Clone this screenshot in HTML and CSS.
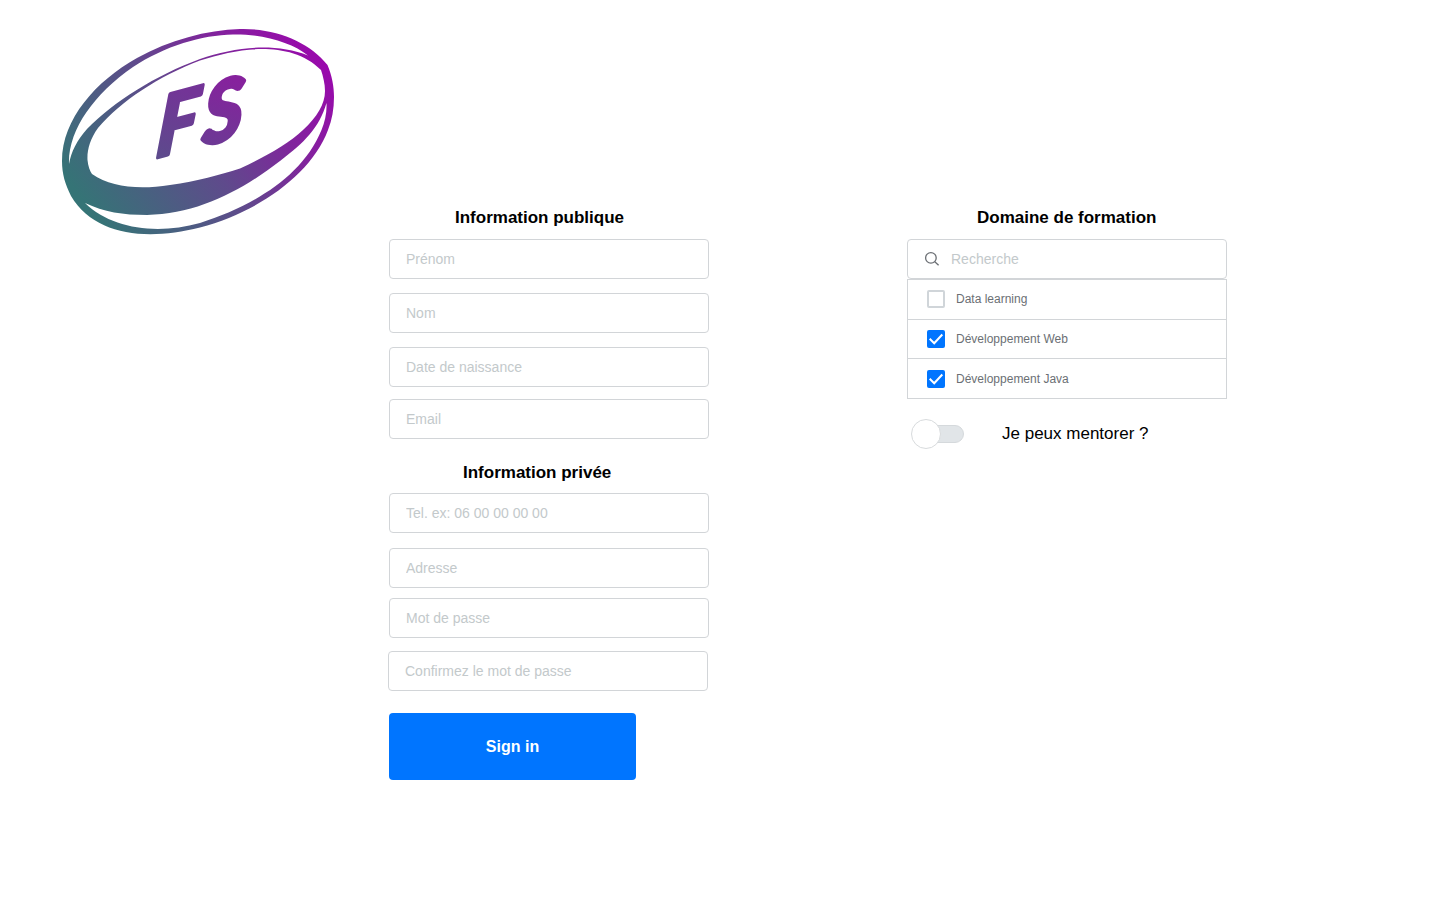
FILE: index.html
```html
<!DOCTYPE html>
<html lang="fr">
<head>
<meta charset="utf-8">
<title>Inscription</title>
<link rel="stylesheet" href="styles.css">
</head>
<body>
<main class="page">
  <header class="brand">
    <svg class="logo" viewBox="60 26 276 210" role="img" aria-label="FS">
      <defs>
        <linearGradient id="ink" gradientUnits="userSpaceOnUse" x1="75" y1="190" x2="300" y2="26">
          <stop offset="0" stop-color="#357476"/>
          <stop offset=".45" stop-color="#5f4a8c"/>
          <stop offset=".72" stop-color="#80259c"/>
          <stop offset="1" stop-color="#9a08ac"/>
        </linearGradient>
        <linearGradient id="ink-f" gradientUnits="userSpaceOnUse" x1="0" y1="0" x2="30" y2="-55">
          <stop offset="0" stop-color="#5c4b8c"/>
          <stop offset="1" stop-color="#733497"/>
        </linearGradient>
        <linearGradient id="ink-s" gradientUnits="userSpaceOnUse" x1="0" y1="0" x2="30" y2="-55">
          <stop offset="0" stop-color="#6b3a94"/>
          <stop offset="1" stop-color="#86229d"/>
        </linearGradient>
      </defs>
      <path fill="url(#ink)" fill-rule="evenodd" d="M240 29C275 28 310 42 327.500 65C332 76 334 86 334 97C334 109 332 120 328 130C311 175 258 212 200 227.500C147 241 95 236 71 196C65 184 62 174 62 161C62 119 96 81 137 58C169 40 207 30 240 29Z
      M69 164C68 130 94 94 133 67C165 46 202 35 233 34.500C264 34 292 43 308 55.500C295 50 278 47.500 263 47.500C242 47.500 220 52 200 59C156 75 113 102 87 129C77 140 71 152 69 164Z
      M98 128C90 139 87 150 87.500 160C88 166 90 171 92 174C111 187 138 190 170 185C198 181 219 175 240 168.500C265 157 288 144 303 130C317 117 325 104 325 91C325 84 323 76 321 70C305 54 283 49 262 49C242 49 220 54 200 60.500C159 76 121 101 98 128Z
      M326.500 103C327 112 325 122 321.500 130C302 178 250 207 200 223C157 235 112 229 85 203C104 212 123 215 147 215C198 214 241 191 280 161C305 142 319 128 326.500 103Z"/>
      <g class="monogram">
        <text class="letter-f" transform="translate(155 158) rotate(-15) skewX(-20)">F</text>
        <text class="letter-s" transform="translate(202 146) rotate(-15) skewX(-18)">S</text>
      </g>
    </svg>
  </header>

  <form class="account">
    <h2 class="title title-public">Information publique</h2>
    <input class="field" placeholder="Prénom">
    <input class="field gap-14" placeholder="Nom">
    <input class="field gap-14" placeholder="Date de naissance">
    <input class="field gap-12" placeholder="Email">
    <h2 class="title title-private">Information privée</h2>
    <input class="field" placeholder="Tel. ex: 06 00 00 00 00">
    <input class="field gap-15" placeholder="Adresse">
    <input class="field gap-10" placeholder="Mot de passe">
    <input class="field confirm" placeholder="Confirmez le mot de passe">
    <button class="submit" type="button">Sign in</button>
  </form>

  <section class="domain">
    <h2 class="title title-domain">Domaine de formation</h2>
    <label class="search">
      <svg class="search-icon" viewBox="0 0 16 16"><circle cx="6.900" cy="6.900" r="5.300"/><path d="M10.800 10.800L14.600 14.300"/></svg>
      <input class="search-input" placeholder="Recherche">
    </label>
    <ul class="options">
      <li class="option option-first"><span class="box"></span>Data learning</li>
      <li class="option option-mid"><span class="box checked"><svg class="tick" viewBox="0 0 18 18"><path d="M2.700 8.800L7.200 13.200L15.300 4.500"/></svg></span>Développement Web</li>
      <li class="option"><span class="box checked"><svg class="tick" viewBox="0 0 18 18"><path d="M2.700 8.800L7.200 13.200L15.300 4.500"/></svg></span>Développement Java</li>
    </ul>
    <div class="mentor">
      <span class="switch"><span class="knob"></span><span class="track"></span></span>
      <span>Je peux mentorer ?</span>
    </div>
  </section>
</main>
</body>
</html>
```
FILE: styles.css
```css
* { box-sizing: border-box; }
body {
  margin: 0;
  background: #fff;
  color: #000;
  font-family: "Liberation Sans", Arial, sans-serif;
}
.page {
  display: grid;
  grid-template-columns: 389px 518px 320px;
  width: 1440px;
  height: 900px;
  overflow: hidden;
}
.brand { padding: 26px 0 0 60px; }
.logo { display: block; width: 276px; height: 210px; }
.monogram {
  font-family: Lato, "Open Sans", sans-serif;
  font-size: 80px;
  font-weight: 700;
  font-style: italic;
  stroke-width: 4px;
  stroke-linejoin: round;
}
.letter-f { fill: url(#ink-f); stroke: url(#ink-f); }
.letter-s { fill: url(#ink-s); stroke: url(#ink-s); }
.account, .domain { padding-top: 208px; }
.title {
  margin: 0;
  height: 31px;
  font-size: 17px;
  line-height: 20px;
  font-weight: 700;
  white-space: nowrap;
}
.title-public { padding-left: 66px; }
.title-private { margin-top: 24px; height: 30px; padding-left: 74px; }
.title-domain { padding-left: 70px; }
.field {
  display: block;
  width: 320px;
  height: 40px;
  margin: 0;
  padding: 0 16px;
  border: 1px solid #d2d5d8;
  border-radius: 4px;
  background: #fff;
  font: 14px/20px "Liberation Sans", Arial, sans-serif;
}
.field::placeholder, .search-input::placeholder { color: #c3c9cb; opacity: 1; }
.gap-10 { margin-top: 10px; }
.gap-12 { margin-top: 12px; }
.gap-14 { margin-top: 14px; }
.gap-15 { margin-top: 15px; }
.confirm { margin: 13px 0 0 -1px; }
.submit {
  display: block;
  width: 247px;
  height: 67px;
  margin-top: 22px;
  padding: 0;
  border: 0;
  border-radius: 4px;
  background: #0075ff;
  color: #fff;
  font: 700 16px/20px "Liberation Sans", Arial, sans-serif;
}
.search {
  display: flex;
  align-items: center;
  gap: 11px;
  height: 40px;
  padding-left: 16px;
  border: 1px solid #d2d5d8;
  border-radius: 4px;
}
.search-icon {
  width: 16px;
  height: 16px;
  fill: none;
  stroke: #6b6f74;
  stroke-width: 1.300;
}
.search-input {
  width: 240px;
  padding: 0;
  border: 0;
  background: none;
  font: 14px/20px "Liberation Sans", Arial, sans-serif;
}
.options {
  margin: 0;
  padding: 0;
  list-style: none;
  border: 1px solid #d2d5d8;
}
.option {
  display: flex;
  align-items: center;
  gap: 11px;
  height: 39px;
  padding-left: 19px;
  color: #6b6f74;
  font-size: 12px;
}
.option-first { padding-bottom: 1px; }
.option-mid {
  height: 40px;
  border: solid #d2d5d8;
  border-width: 1px 0;
}
.box {
  width: 18px;
  height: 18px;
  border: 2px solid #d0d5d9;
  border-radius: 2px;
}
.checked { border: 0; background: #0075ff; }
.tick {
  display: block;
  width: 18px;
  height: 18px;
  fill: none;
  stroke: #fff;
  stroke-width: 2;
}
.mentor {
  display: flex;
  align-items: center;
  gap: 38px;
  height: 30px;
  margin: 20px 0 0 4px;
  font-size: 17px;
}
.switch { display: flex; align-items: center; width: 53px; }
.knob {
  z-index: 1;
  flex: none;
  width: 30px;
  height: 30px;
  border: 1px solid #d8dbdd;
  border-radius: 50%;
  background: #fff;
}
.track {
  flex: none;
  width: 38px;
  height: 18px;
  margin-left: -15px;
  border: 1px solid #d5d9dc;
  border-radius: 9px;
  background: #e1e5e8;
}
```
